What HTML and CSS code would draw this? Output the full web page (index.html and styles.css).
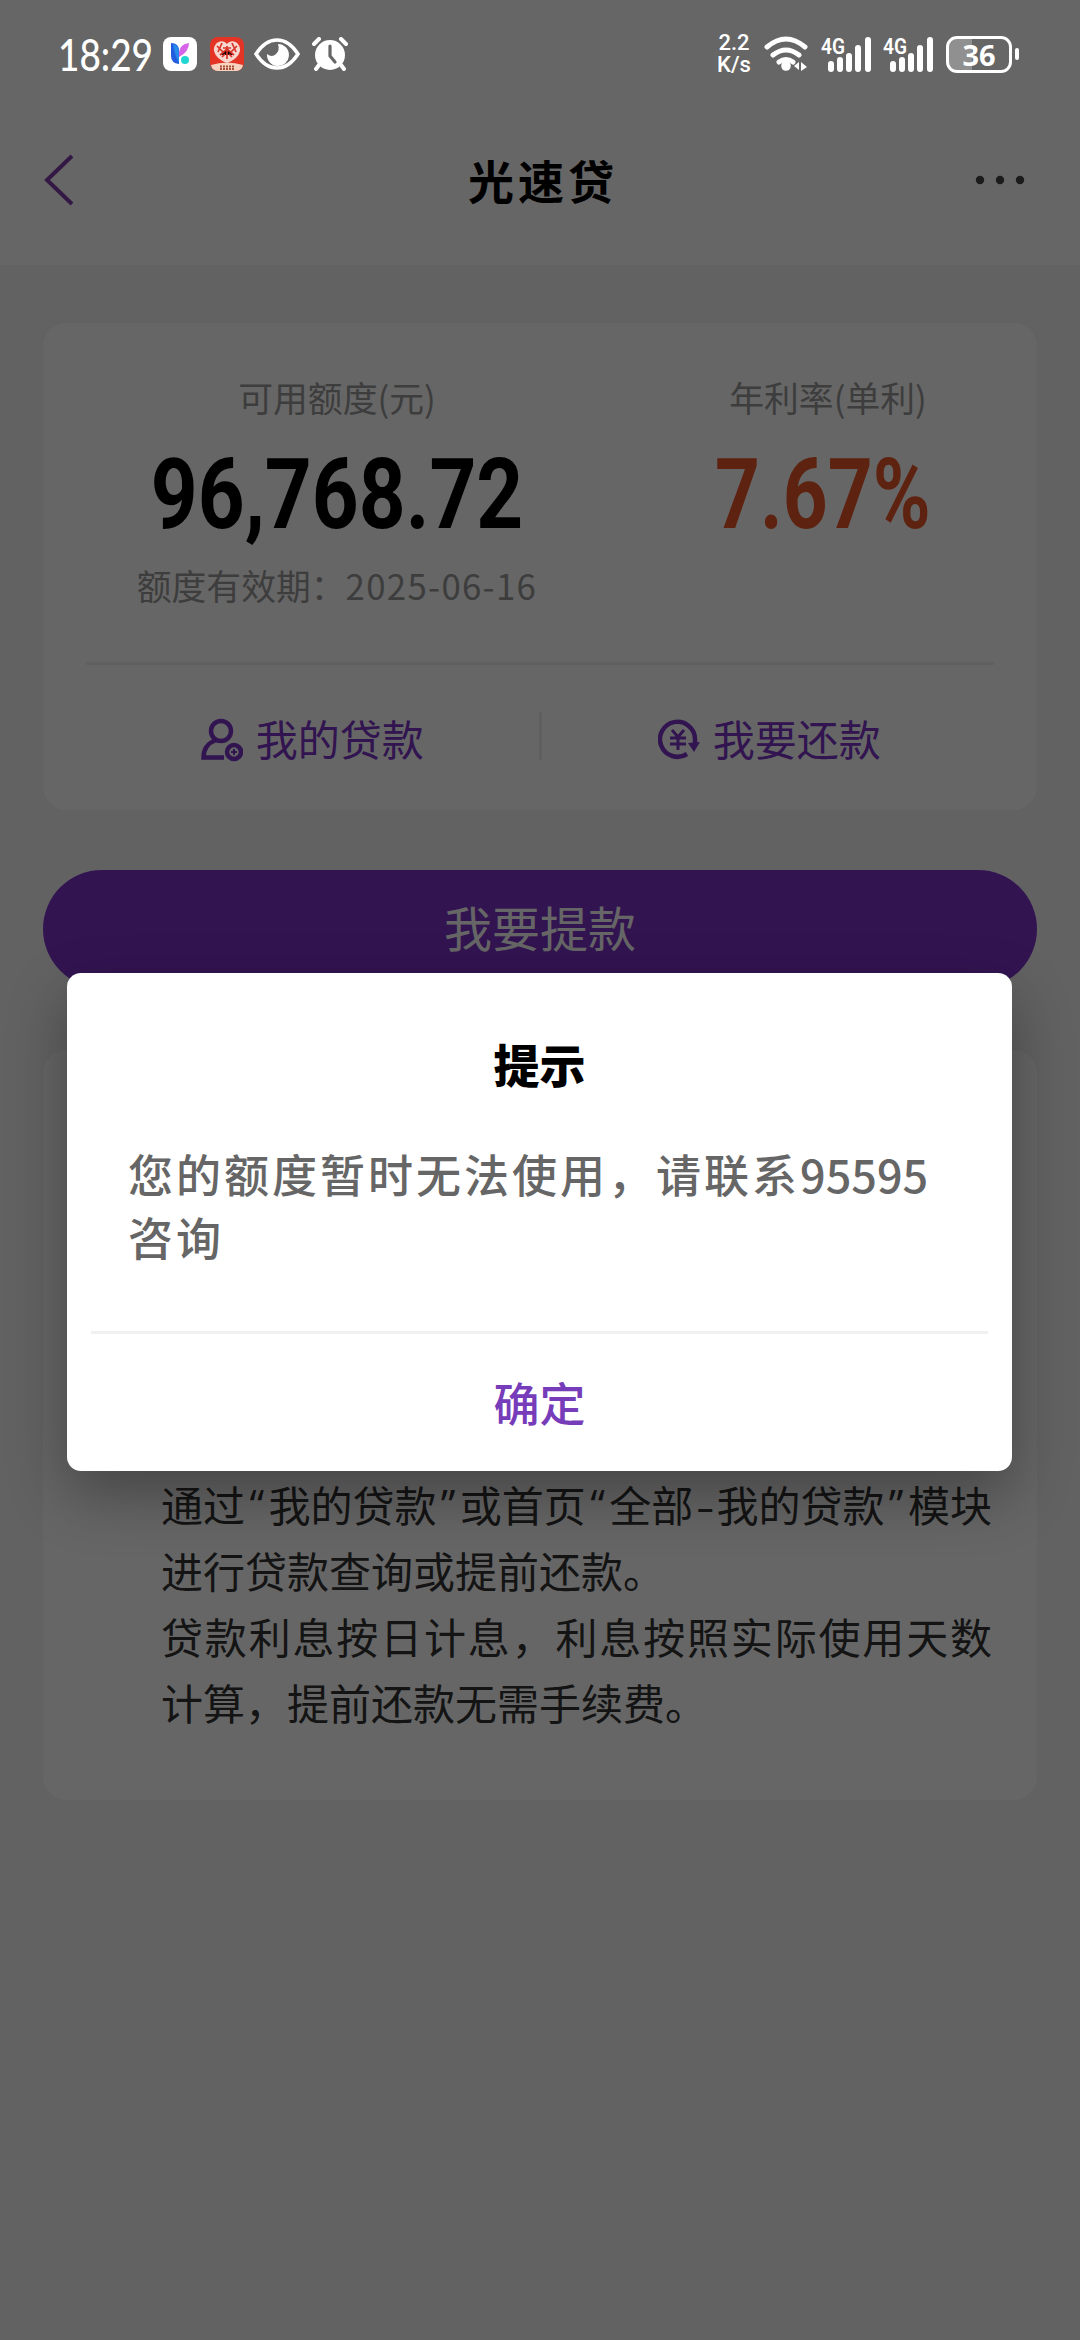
FILE: index.html
```html
<!DOCTYPE html>
<html lang="zh-CN">
<head>
<meta charset="utf-8">
<title>光速贷</title>
<link rel="stylesheet" href="styles.css">
</head>
<body>
<div class="page">
  <header class="nav">
    <svg class="back" viewBox="0 0 30 52"><path d="M28 2 3 26 28 50"/></svg>
    <h1 class="title">光速贷</h1>
    <svg class="more" viewBox="0 0 52 10"><circle cx="6" cy="5" r="4.2"/><circle cx="26" cy="5" r="4.2"/><circle cx="46" cy="5" r="4.2"/></svg>
  </header>
  <main class="content">
    <section class="card">
      <div class="quota">
        <div class="col col-left">
          <p class="label">可用额度(元)</p>
          <p class="figure"><span class="num">96,768.72</span></p>
          <p class="label expiry">额度有效期：<span class="date">2025-06-16</span></p>
        </div>
        <div class="col col-right">
          <p class="label">年利率(单利)</p>
          <p class="figure rate"><span class="num">7.67%</span></p>
        </div>
      </div>
      <div class="links">
        <a class="link"><svg class="icon" viewBox="0 0 42 44"><circle cx="20" cy="13" r="10"/><path d="M15 22C7 25 2.500 31 2.500 39.500H23"/><circle cx="33" cy="34" r="7"/><path class="thin" d="M33 31v6M30 34h6"/></svg><span>我的贷款</span></a>
        <i class="bar"></i>
        <a class="link link-right"><svg class="icon" viewBox="0 0 42 44"><path d="M29 36A17.500 17.500 0 1 1 37 21v5"/><path class="fill" d="M30 25l12-1-6 10z"/><path class="mid" d="M14 12l6 7 6-7M12 20h16M12 26h16M20 19v13"/></svg><span>我要还款</span></a>
      </div>
    </section>
    <button class="submit">我要提款</button>
    <section class="card notes">
      <p class="note first"><span>通过</span><span class="q">“</span><span>我的贷款</span><span class="q">”</span><span>或首页</span><span class="q">“</span><span>全部</span><span class="dash">-</span><span>我的贷款</span><span class="q">”</span><span>模块</span></p>
      <p class="note">进行贷款查询或提前还款。</p>
      <p class="note wide">贷款利息按日计息，利息按照实际使用天数</p>
      <p class="note">计算，提前还款无需手续费。</p>
    </section>
  </main>
</div>

<div class="overlay">
  <div class="dialog">
    <h2 class="dialog-title">提示</h2>
    <p class="message"><span class="line">您的额度暂时无法使用，请联系<span class="phone">95595</span></span><span class="line">咨询</span></p>
    <button class="ok">确定</button>
  </div>
</div>

<div class="status">
  <div class="group">
    <span class="clock"><span class="time">18:29</span></span>
    <svg class="app" viewBox="0 0 34 34"><rect width="34" height="34" rx="8" fill="#fff"/><path d="M8 6q8 0 8 8v13q-8-1-8-8z" fill="#245cdf"/><path d="M16 15q1-8 10-9 0 9-10 14z" fill="#d765e8"/><path d="M10 7q6 2 6 8v11q-4-7-6-19z" fill="#278bea"/><circle cx="22" cy="23" r="4" fill="#22d6d3"/></svg>
    <svg class="app app-red" viewBox="0 0 34 34"><rect width="34" height="34" rx="8" fill="#e43425"/><path d="M17 7C12 1 3 6 4 14q2 8 13 12 11-4 13-12C31 6 22 1 17 7z" fill="#f8d7cf"/><path d="M7 9l6 6M12 6l-4 9M10 18l7-6 7 6M22 6l4 9M27 9l-6 6M13 11h8M17 9v13M12 20l3-3M22 20l-3-3" stroke="#d83429" stroke-width="1.700"/><path d="M1 28q16-5 32 0-1 6-8 6H9q-7 0-8-6z" fill="#f7d2be"/><path d="M10 29.500h14M10 32h14" stroke="#a74f3a" stroke-width="2" stroke-dasharray="2 1"/></svg>
    <svg class="eye" viewBox="0 0 46 32"><path d="M2 16Q11 2 23 2t21 14Q35 30 23 30T2 16z" fill="none" stroke="#fff" stroke-width="3.500"/><path d="M24 6a11 11 0 1 1-11 10q5 4 9 0t2-10z" fill="#fff"/></svg>
    <svg class="alarm" viewBox="0 0 36 34"><circle cx="18" cy="18" r="15" fill="#fff"/><path d="M2 7l5-5M34 7l-5-5M7 28l-3 4M29 28l3 4" stroke="#fff" stroke-width="4" stroke-linecap="round"/><path d="M18 9v10l5 6" stroke="#666" stroke-width="3.200" fill="none" stroke-linecap="round"/></svg>
  </div>
  <div class="group">
    <span class="speed"><span>2.2</span><span>K/s</span></span>
    <svg class="wifi" viewBox="0 0 46 36"><g fill="none" stroke="#fff" stroke-width="5" stroke-linecap="round"><path d="M3 11Q22-5 41 11M9 19q13-10 26 0M15 26q7-5 14 0"/></g><circle cx="22" cy="30" r="4.800" fill="#fff"/><path d="M30 30l5-4v8zM37 26l6 5-6 4z" fill="#fff"/></svg>
    <svg class="signal" viewBox="0 -6 52 50"><text x="1" y="19" class="gen" textLength="24" lengthAdjust="spacingAndGlyphs">4G</text><path d="M11 29v5M20 25v9M29 21v13M38 13v21M48 5v29"/></svg>
    <svg class="signal" viewBox="0 -6 52 50"><text x="1" y="19" class="gen" textLength="24" lengthAdjust="spacingAndGlyphs">4G</text><path d="M11 29v5M20 25v9M29 21v13M38 13v21M48 5v29"/></svg>
    <span class="battery"><span class="cell">36</span><i class="cap"></i></span>
  </div>
</div>
</body>
</html>
```

FILE: styles.css
```css
* { box-sizing: border-box; }
body, p, h1, h2 { margin: 0; }
body {
  width: 1080px;
  height: 2340px;
  overflow: hidden;
  font-family: "Noto Sans CJK SC", sans-serif;
  background: #f5f5f5;
}
.page { height: 2340px; }
.nav {
  height: 265px;
  padding: 97px 54px 0 44px;
  display: grid;
  grid-template-columns: 52px 1fr 52px;
  align-items: start;
  background: #fff;
}
.back { width: 30px; height: 52px; margin-top: 57px; fill: none; stroke: #803cac; stroke-width: 4; }
.title { margin: 46px 0 0 16px; font-weight: 700; font-size: 46px; line-height: 72px; letter-spacing: 4px; text-align: center; color: #000; }
.more { width: 52px; height: 10px; margin-top: 78px; fill: #444; }
.content { padding: 58px 43px 0; }
.card { border-radius: 24px; background: #fff; }
.content > .card:first-child { height: 487px; padding: 0 43px; }
.quota { height: 342px; display: flex; border-bottom: 3px solid #f0f0f0; }
.col { flex: none; display: flex; flex-direction: column; align-items: center; padding-top: 48px; text-align: center; }
.col-left { width: 502px; }
.col-right { width: 480px; }
.label { font-size: 34.800px; line-height: 52px; color: #999; white-space: nowrap; }
.figure { height: 120px; margin-top: 12px; font-family: Roboto, sans-serif; font-weight: 700; font-size: 98px; line-height: 120px; color: #000; }
.num { display: inline-block; transform: scaleX(.835); white-space: nowrap; }
.rate { color: #eb5728; padding-right: 10px; }
.rate .num { transform: scaleX(.8); }
.expiry { margin-top: 4px; }
.date { letter-spacing: 1.300px; }
.links { height: 142px; display: grid; grid-template-columns: 1fr 3px 1fr; align-items: center; }
.link { display: flex; align-items: center; justify-content: center; gap: 13px; font-size: 42px; line-height: 60px; color: #7a32c8; padding-top: 3px; }
.link-right { padding-left: 3px; }
.icon { width: 42px; height: 44px; fill: none; stroke: #7a32c8; stroke-width: 4.500; margin-top: 5px; }
.thin { stroke-width: 2; }
.mid { stroke-width: 3; }
.fill { fill: #7a32c8; stroke: none; }
.bar { height: 48px; background: #ededed; }
.submit { display: block; width: 994px; height: 118px; margin-top: 60px; border: 0; border-radius: 59px; padding: 0 0 6px; font: 400 48px/112px "Noto Sans CJK SC", sans-serif; color: #fff; background: #7d32ca; }
.notes { height: 750px; margin-top: 62px; padding: 421px 45px 0 118px; }
.note { font-size: 42px; line-height: 66px; color: #333; white-space: nowrap; }
.first { display: flex; justify-content: space-between; }
.q { font-family: "Open Sans", sans-serif; }
.dash { transform: scaleX(1.3); }
.wide { text-align: justify; text-align-last: justify; text-justify: inter-character; }

.overlay { position: absolute; inset: 0; padding: 973px 68px 0 67px; background: rgba(0, 0, 0, .6); }
.dialog { height: 498px; padding: 54px 24px 0; border-radius: 14px; background: #fff; box-shadow: 0 24px 60px rgba(0, 0, 0, .32); }
.dialog-title { font-size: 46px; line-height: 72px; font-weight: 900; text-align: center; color: #000; }
.message { height: 194px; margin-top: 41px; padding: 2px 37px 0; color: #666; font-size: 45px; font-weight: 500; line-height: 63px; border-bottom: 3px solid #f0f0f0; }
.line { display: block; white-space: nowrap; letter-spacing: 3px; }
.phone { letter-spacing: 0; }
.ok { display: block; width: 100%; height: 98px; margin-top: 18px; padding: 0; border: 0; background: none; font: 500 46px/98px "Noto Sans CJK SC", sans-serif; color: #773cb9; }

.status { position: absolute; inset: 0 0 auto; height: 108px; padding: 0 61px 0 58px; display: flex; align-items: center; justify-content: space-between; color: #fff; }
.group { display: flex; align-items: center; }
.clock { width: 94px; font: 500 44px/56px Lato, sans-serif; }
.time { display: inline-block; transform: scaleX(.84); transform-origin: 0 50%; }
.app { width: 34px; height: 34px; margin-left: 11px; }
.app-red { margin-left: 13px; }
.eye { width: 46px; height: 32px; margin-left: 10px; }
.alarm { width: 36px; height: 34px; margin-left: 12px; }
.speed { display: flex; flex-direction: column; width: 36px; font: 500 22px/22px Roboto, sans-serif; text-align: center; }
.wifi { width: 46px; height: 36px; margin-left: 12px; }
.signal { width: 52px; height: 50px; margin-left: 10px; fill: none; stroke: #fff; stroke-width: 6; stroke-linecap: round; }
.gen { font: 600 22px Roboto, sans-serif; fill: #fff; stroke: none; }
.battery { display: flex; align-items: center; gap: 3px; margin-left: 12px; }
.cell { width: 66px; height: 37px; border: 3px solid #fff; border-radius: 11px; background: linear-gradient(90deg, #909090 39%, transparent 39%); font: 700 29px/31px "Noto Sans", sans-serif; text-align: center; }
.cap { width: 4px; height: 12px; border-radius: 2px; background: #fff; }
```
